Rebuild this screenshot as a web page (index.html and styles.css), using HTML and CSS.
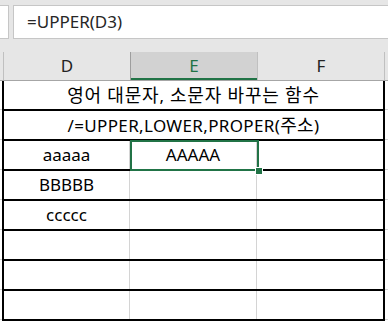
FILE: index.html
```html
<!DOCTYPE html>
<html lang="ko">
<head>
<meta charset="utf-8">
<link rel="stylesheet" href="styles.css">
</head>
<body>
<div class="topbar">
  <div class="namebox"></div>
  <div class="formula">=UPPER(D3)</div>
</div>
<div class="colheads">
  <div class="corner"></div>
  <div class="ch">D</div>
  <div class="ch sel">E</div>
  <div class="ch last">F</div>
</div>
<div class="area">
  <div class="sheet">
    <div class="row"><div class="cell merged title"><span class="ko">영어 대문자</span>, <span class="ko">소문자 바꾸는 함수</span></div></div>
    <div class="row"><div class="cell merged syntax">/=UPPER,LOWER,PROPER(<span class="ko">주소</span>)</div></div>
    <div class="row"><div class="cell">aaaaa</div><div class="cell">AAAAA</div><div class="cell"></div></div>
    <div class="row"><div class="cell">BBBBB</div><div class="cell"></div><div class="cell"></div></div>
    <div class="row"><div class="cell">ccccc</div><div class="cell"></div><div class="cell"></div></div>
    <div class="row"><div class="cell"></div><div class="cell"></div><div class="cell"></div></div>
    <div class="row"><div class="cell"></div><div class="cell"></div><div class="cell"></div></div>
    <div class="row"><div class="cell"></div><div class="cell"></div><div class="cell"></div></div>
  </div>
  <div class="selection"><span class="handle"></span></div>
</div>
</body>
</html>
```
FILE: styles.css
```css
html, body {
  margin: 0;
  padding: 0;
}
body {
  width: 388px;
  height: 323px;
  overflow: hidden;
  background: #fff;
  font-family: "Noto Sans", "Noto Sans CJK KR", sans-serif;
  color: #000;
}
.topbar {
  height: 52px;
  box-sizing: border-box;
  padding-top: 5px;
  background: #e6e6e6;
  display: flex;
  align-items: flex-start;
  gap: 4px;
}
.namebox {
  width: 9px;
  height: 34px;
  box-sizing: border-box;
  background: #fff;
  border: 1px solid #c6c6c6;
  border-left: none;
}
.formula {
  flex: 1;
  height: 34px;
  box-sizing: border-box;
  background: #fff;
  border: 1px solid #c6c6c6;
  border-right: none;
  padding-left: 13px;
  font-size: 17px;
  line-height: 32px;
  color: #262626;
}
.colheads {
  height: 29px;
  box-sizing: border-box;
  background: #e6e6e6;
  border-bottom: 1px solid #a6a6a6;
  display: flex;
}
.corner {
  width: 3px;
}
.ch {
  width: 127px;
  box-sizing: border-box;
  border-left: 1px solid #c0c0c0;
  text-align: center;
  font-size: 17px;
  line-height: 28px;
  color: #222;
}
.ch.sel {
  background: #d2d2d2;
  border-left-color: #9e9e9e;
  color: #217346;
  box-shadow: inset 0 -2px 0 #217346;
}
.ch.last {
  border-right: 1px solid #c0c0c0;
  width: 128px;
}
.area {
  position: relative;
  height: 242px;
  background: repeating-linear-gradient(to bottom, #fff 0 28px, #d4d4d4 28px 29px, #fff 29px 30px);
}
.sheet {
  margin-left: 2px;
  width: 383px;
  box-sizing: border-box;
  border-left: 2px solid #000;
  border-right: 2px solid #000;
  background: #fff;
}
.row {
  display: flex;
  height: 30px;
  box-sizing: border-box;
  border-bottom: 2px solid #000;
}
.cell {
  width: 126px;
  box-sizing: border-box;
  border-right: 1px solid #d4d4d4;
  text-align: center;
  font-size: 17px;
  line-height: 28px;
  white-space: nowrap;
}
.cell:nth-child(2) {
  width: 127px;
}
.cell:nth-child(3) {
  width: 126px;
  border-right: none;
}
.cell.merged {
  width: auto;
  flex: 1;
  border-right: none;
}
.ko {
  font-size: 18px;
}
.title {
  letter-spacing: 0.8px;
}
.syntax {
  letter-spacing: 0.35px;
}
.selection {
  position: absolute;
  left: 130px;
  top: 59px;
  width: 129px;
  height: 31px;
  box-sizing: border-box;
  border: 2px solid #217346;
}
.handle {
  position: absolute;
  left: 123px;
  top: 25px;
  width: 6px;
  height: 6px;
  background: #217346;
  border: 1px solid #fff;
}
```
